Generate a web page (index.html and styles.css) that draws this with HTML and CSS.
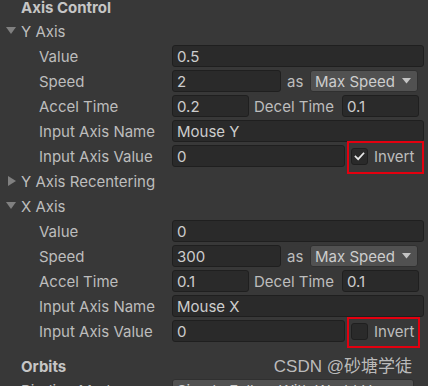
FILE: index.html
```html
<!DOCTYPE html>
<html>
<head>
<meta charset="utf-8">
<link rel="stylesheet" href="styles.css">
</head>
<body>
<div class="inspector">
  <div class="header first">Axis Control</div>

  <div class="row fold"><span class="foldout open"></span><span class="name">Y Axis</span></div>
  <div class="row sub"><span class="label">Value</span><div class="controls"><div class="field fill">0.5</div></div></div>
  <div class="row sub"><span class="label">Speed</span><div class="controls"><div class="field w-speed">2</div><span class="inline-label as">as</span><div class="dropdown w-mode"><span>Max Speed</span><svg class="arrow" width="9" height="6" viewBox="0 0 9 6"><polygon points="0,0 9,0 4.5,5.5" fill="#c4c4c4"/></svg></div></div></div>
  <div class="row sub"><span class="label">Accel Time</span><div class="controls"><div class="field w-time">0.2</div><span class="inline-label decel">Decel Time</span><div class="field w-time">0.1</div></div></div>
  <div class="row sub"><span class="label">Input Axis Name</span><div class="controls"><div class="field fill">Mouse Y</div></div></div>
  <div class="row sub"><span class="label">Input Axis Value</span><div class="controls"><div class="field w-value">0</div><div class="toggle marked"><span class="checkbox"><svg width="17" height="17" viewBox="0 0 17 17"><polyline points="4,8.5 7,11.5 13,5" fill="none" stroke="#e8e8e8" stroke-width="2" stroke-linecap="square"/></svg></span><span>Invert</span></div></div></div>

  <div class="row fold"><span class="foldout closed"></span><span class="name">Y Axis Recentering</span></div>

  <div class="row fold"><span class="foldout open"></span><span class="name">X Axis</span></div>
  <div class="row sub"><span class="label">Value</span><div class="controls"><div class="field fill">0</div></div></div>
  <div class="row sub"><span class="label">Speed</span><div class="controls"><div class="field w-speed">300</div><span class="inline-label as">as</span><div class="dropdown w-mode"><span>Max Speed</span><svg class="arrow" width="9" height="6" viewBox="0 0 9 6"><polygon points="0,0 9,0 4.5,5.5" fill="#c4c4c4"/></svg></div></div></div>
  <div class="row sub"><span class="label">Accel Time</span><div class="controls"><div class="field w-time">0.1</div><span class="inline-label decel">Decel Time</span><div class="field w-time">0.1</div></div></div>
  <div class="row sub"><span class="label">Input Axis Name</span><div class="controls"><div class="field fill">Mouse X</div></div></div>
  <div class="row sub"><span class="label">Input Axis Value</span><div class="controls"><div class="field w-value">0</div><div class="toggle marked narrow"><span class="checkbox"></span><span>Invert</span></div></div></div>

  <div class="header second">Orbits</div>
  <div class="row top-level"><span class="label">Binding Mode</span><div class="controls"><div class="dropdown w-binding"><span>Simple Follow With World Up</span></div></div></div>

  <div class="watermark">CSDN @砂塘学徒</div>
</div>
</body>
</html>
```

FILE: styles.css
```css
html, body {
  margin: 0;
  padding: 0;
  height: 386px;
  overflow: hidden;
  background: #383838;
}

.inspector {
  position: relative;
  width: 428px;
  height: 386px;
  font-family: Inter, "Noto Sans", sans-serif;
  font-size: 15px;
  color: #bdbdbd;
}

.header {
  height: 22px;
  display: flex;
  align-items: center;
  padding-left: 21px;
  font-weight: 700;
  color: #c6c6c6;
}

.header.first {
  margin-top: -3.5px;
}

.header.second {
  margin-top: 12px;
}

.row {
  height: 25px;
  display: flex;
  align-items: center;
  white-space: nowrap;
}

.foldout {
  width: 10px;
  height: 10px;
  margin-left: 6px;
  margin-right: 5px;
  position: relative;
}

.foldout.open::before {
  content: "";
  position: absolute;
  left: 0;
  top: 1px;
  border-left: 5px solid transparent;
  border-right: 5px solid transparent;
  border-top: 7.5px solid #808080;
}

.foldout.closed::before {
  content: "";
  position: absolute;
  left: 1.5px;
  top: 0;
  border-top: 5px solid transparent;
  border-bottom: 5px solid transparent;
  border-left: 8px solid #808080;
}

.label {
  width: 172px;
  box-sizing: border-box;
  flex: none;
}

.sub .label {
  padding-left: 39px;
}

.top-level .label {
  padding-left: 21px;
}

.controls {
  flex: 1;
  display: flex;
  align-items: center;
  padding-right: 4px;
}

.field {
  height: 22px;
  box-sizing: border-box;
  background: #2a2a2a;
  border: 1px solid #1f1f1f;
  border-radius: 3px;
  padding-left: 4px;
  display: flex;
  align-items: center;
  color: #cdcdcd;
  flex: none;
}

.field.fill {
  flex: 1;
}

.w-speed { width: 109px; }
.w-time { width: 77px; }
.w-value { width: 173px; }

.inline-label {
  flex: none;
}

.inline-label.as {
  margin-left: 6px;
  width: 23px;
}

.inline-label.decel {
  margin-left: 5px;
  width: 88px;
}

.dropdown {
  height: 22px;
  box-sizing: border-box;
  background: #515151;
  border: 1px solid #303030;
  border-radius: 3px;
  padding-left: 4px;
  padding-right: 6px;
  display: flex;
  align-items: center;
  justify-content: space-between;
  color: #cdcdcd;
  flex: none;
}

.w-mode { width: 108px; }
.w-binding { width: 242px; }

.toggle {
  margin-left: 6px;
  display: flex;
  align-items: center;
  position: relative;
  flex: none;
}

.toggle.marked::after {
  content: "";
  position: absolute;
  left: -4px;
  right: -10px;
  top: -6px;
  bottom: -8px;
  border: 2px solid #e3000f;
}

.toggle.marked.narrow::after {
  right: -6px;
  top: -5px;
  bottom: -7px;
}

.checkbox {
  width: 17px;
  height: 17px;
  box-sizing: border-box;
  background: #2a2a2a;
  border: 1px solid #1f1f1f;
  border-radius: 3px;
  margin-right: 6px;
  display: flex;
  align-items: center;
  justify-content: center;
}

.checkbox svg {
  display: block;
}

.watermark {
  position: absolute;
  right: 16px;
  top: 355px;
  font-family: "Liberation Sans", "Noto Sans CJK SC", sans-serif;
  font-size: 17px;
  color: rgba(205, 205, 205, 0.9);
}
```
